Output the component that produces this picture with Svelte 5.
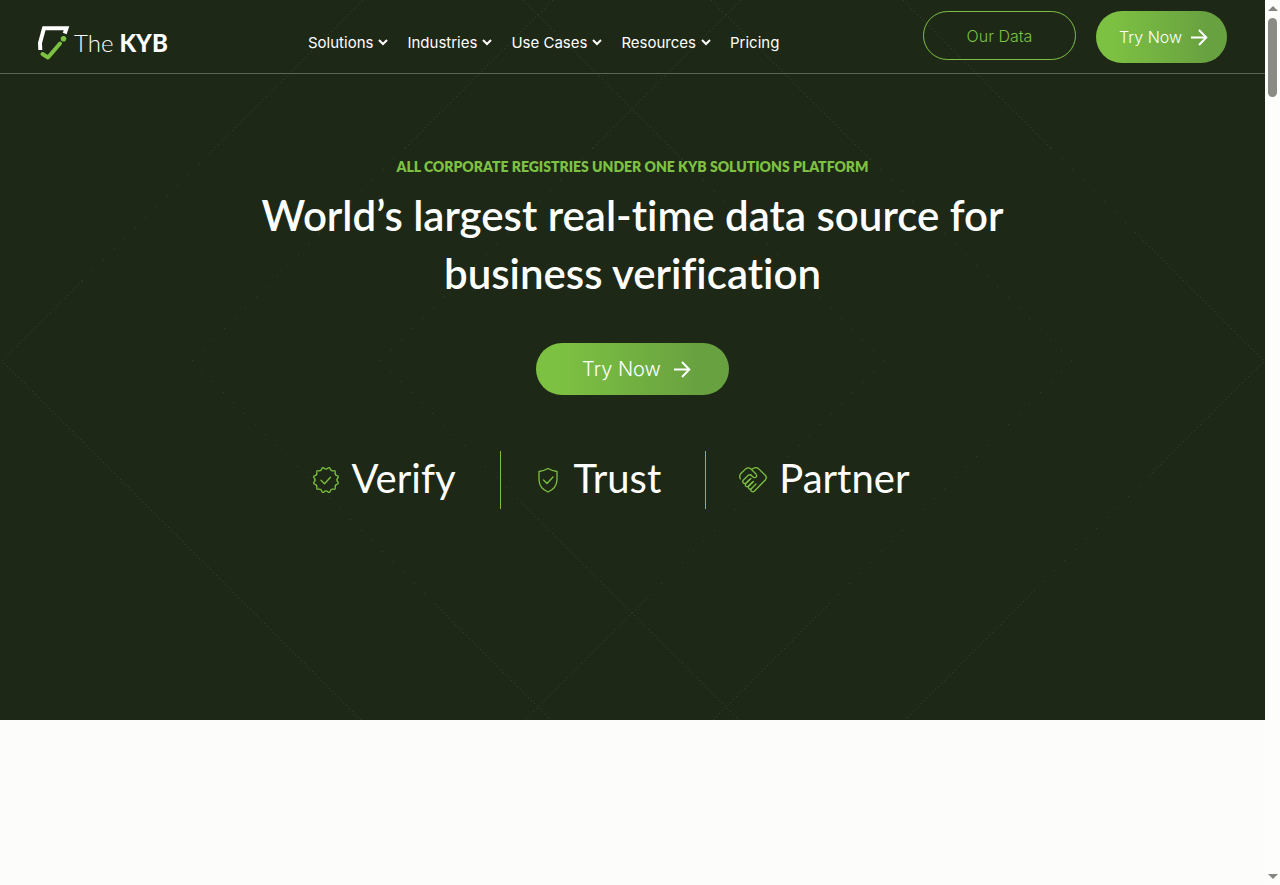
<script>
    const menu = [
        { label: 'Solutions', dropdown: true },
        { label: 'Industries', dropdown: true },
        { label: 'Use Cases', dropdown: true },
        { label: 'Resources', dropdown: true },
        { label: 'Pricing', dropdown: false }
    ];

    const features = [
        { label: 'Verify', icon: 'seal' },
        { label: 'Trust', icon: 'shield' },
        { label: 'Partner', icon: 'hands' }
    ];

    // scalloped outline of the seal icon
    function sealPath(bumps, outer, inner) {
        const points = [];
        for (let i = 0; i < bumps * 2; i++) {
            const angle = (i * Math.PI) / bumps - Math.PI / 2 + Math.PI / bumps;
            const r = i % 2 ? inner : outer;
            points.push([14 + r * Math.cos(angle), 14 + r * Math.sin(angle)]);
        }
        const mid = (a, b) => `${((a[0] + b[0]) / 2).toFixed(2)} ${((a[1] + b[1]) / 2).toFixed(2)}`;
        let d = `M${mid(points[points.length - 1], points[0])}`;
        points.forEach((p, i) => {
            const next = points[(i + 1) % points.length];
            d += `Q${p[0].toFixed(2)} ${p[1].toFixed(2)} ${mid(p, next)}`;
        });
        return d + 'Z';
    }

    const seal = sealPath(12, 13.8, 10);
</script>

{#snippet arrow()}
    <svg class="arrow" viewBox="0 0 18 18" aria-hidden="true">
        <path d="M1 9.500h15M9 2l7.300 7.500L9 17" />
    </svg>
{/snippet}

<div class="screen">
    <div class="page">
        <div class="top">
            <svg class="lines" viewBox="0 0 1265 720" preserveAspectRatio="xMidYMid slice" aria-hidden="true">
                <g class="strong">
                    <path d="M363 0L210 153M82 281L2 361L361 720" />
                    <path d="M903 0L1051 148M1135 232L1264 361L1150 475M1035 590L905 720" />
                    <path d="M553 0L405 148M435 604L551 720M741 0L593 148" />
                    <path d="M523 0L682 159M711 0L870 159M830 603L713 720" />
                    <path d="M521 502L739 720M647 598L525 720" />
                </g>
                <g class="faint">
                    <path d="M210 153L82 281M405 148L192 361L435 604" />
                    <path d="M593 148L380 361L521 502M1051 148L1135 232" />
                    <path d="M682 159L884 361L647 598M870 159L1072 361L830 603M1150 475L1035 590" />
                </g>
            </svg>

            <header>
                <a class="logo" href="/" aria-label="The KYB">
                    <svg viewBox="0 0 32 36" aria-hidden="true">
                        <path class="frame" d="M2.300 25L2 18L6 3.300H28.500L26.700 8.500" />
                        <path class="tick" d="M4.500 29L10 32.500L22 18.500" />
                        <circle cx="25.5" cy="13.8" r="2.8" />
                    </svg>
                    <span class="the">The</span>
                    <span class="kyb">KYB</span>
                </a>
                <nav>
                    {#each menu as item}
                        <a href="/">
                            {item.label}
                            {#if item.dropdown}
                                <svg viewBox="0 0 10 8" aria-hidden="true"><path d="M1 2l4 4 4-4" /></svg>
                            {/if}
                        </a>
                    {/each}
                </nav>
                <div class="actions">
                    <a class="pill outline" href="/">Our Data</a>
                    <a class="pill filled" href="/">Try Now {@render arrow()}</a>
                </div>
            </header>

            <section class="hero">
                <p class="eyebrow">ALL CORPORATE REGISTRIES UNDER ONE KYB SOLUTIONS PLATFORM</p>
                <h1>World’s largest real-time data source for business verification</h1>
                <a class="pill filled large" href="/">Try Now {@render arrow()}</a>

                <ul>
                    {#each features as feature}
                        <li>
                            <svg viewBox="0 0 28 28" aria-hidden="true">
                                {#if feature.icon === 'seal'}
                                    <path d={seal} />
                                    <path d="M9 14.300l3.500 3.500 6-6.500" />
                                {:else if feature.icon === 'shield'}
                                    <path d="M14 2.500Q9.500 5 5 5.500V14Q5.500 22.500 14 26Q22.500 22.500 23 14V5.500Q18.500 5 14 2.500Z" />
                                    <path d="M9.500 14l3.500 3.500 6-6.500" />
                                {:else}
                                    <path d="M1.300 13Q-.3 9.500 2.300 7L7 2.600Q9.500 1 12 3L17 8Q18.500 10.400 16.500 11.400Q15 12 13.500 10.500L11.800 8.800" />
                                    <path d="M12.500 3.500L14.500 2.200Q17 .8 19.500 2.600L26.500 9.500Q28 11.500 26.500 13.700L15.500 25Q14 26.500 12.400 25.200Q11 24 12.500 22.500L17 18" />
                                    <path d="M11.800 8.800L9.500 9L4.200 14.200Q3 16 4.500 17.200Q6 18 7.200 16.900L10.500 13.500" />
                                    <path d="M12 12.500L6.600 17.800Q5.700 19.200 6.900 20.300Q8.200 21.200 9.500 20L13.500 16" />
                                    <path d="M14.500 15.500L9.700 20.300Q8.800 21.800 10 22.800Q11.200 23.800 12.700 22.400" />
                                {/if}
                            </svg>
                            <span>{feature.label}</span>
                        </li>
                    {/each}
                </ul>
            </section>
        </div>
    </div>

    <div class="scrollbar" aria-hidden="true">
        <svg viewBox="0 0 10 5"><path d="M0 5L5 0L10 5Z" /></svg>
        <div class="track"><div class="thumb"></div></div>
        <svg viewBox="0 0 10 5"><path d="M0 0L5 5L10 0Z" /></svg>
    </div>
</div>

<style>
    :global(body) {
        margin: 0;
        background: #fcfcfa;
    }

    .screen {
        display: flex;
        height: 100vh;
        overflow: hidden;
        font-family: Lato, "Noto Sans", sans-serif;
        font-variant-ligatures: none;
        color: #fff;
    }

    .page {
        flex: 1;
        min-width: 0;
    }

    a {
        color: inherit;
        text-decoration: none;
    }

    svg {
        flex: none;
        fill: none;
        stroke: currentColor;
    }

    .top {
        position: relative;
        background: #1e2816;
    }

    .lines {
        position: absolute;
        inset: 0;
        width: 100%;
        height: 100%;
        stroke: #3c4934;
    }

    .strong {
        stroke-dasharray: 1 3;
    }

    .faint {
        stroke-dasharray: 1 14;
    }

    header {
        position: relative;
        display: flex;
        align-items: flex-start;
        height: 73px;
        padding: 0 38px;
        border-bottom: 1px solid #5a6650;
    }

    .logo {
        display: flex;
        align-items: center;
        width: 270px;
        height: 86px;
        font-size: 24px;
        line-height: 32px;
    }

    .logo svg {
        width: 32px;
        height: 36px;
        margin-right: 4px;
    }

    .frame {
        stroke: #fff;
        stroke-width: 4;
    }

    .tick {
        stroke: #7dc142;
        stroke-width: 4;
        stroke-linecap: round;
        stroke-linejoin: round;
    }

    circle {
        fill: #7dc142;
        stroke: none;
    }

    .the {
        font-weight: 300;
        margin-right: 6px;
    }

    .kyb {
        font-weight: 900;
    }

    nav {
        display: flex;
        gap: 19px;
        height: 84px;
        font-family: Inter, sans-serif;
        font-size: 15px;
    }

    nav a {
        display: flex;
        align-items: center;
        gap: 5px;
        white-space: nowrap;
    }

    nav svg {
        width: 10px;
        height: 8px;
        stroke-width: 2;
    }

    .actions {
        display: flex;
        align-items: flex-start;
        gap: 20px;
        margin-left: auto;
        padding-top: 11px;
    }

    .pill {
        box-sizing: border-box;
        display: flex;
        align-items: center;
        justify-content: center;
        border-radius: 26px;
        font-family: Inter, sans-serif;
        font-size: 16px;
        font-weight: 300;
        white-space: nowrap;
    }

    .outline {
        width: 153px;
        height: 49px;
        border: 1px solid #7dc142;
        color: #7dc142;
    }

    .filled {
        gap: 8px;
        width: 131px;
        height: 52px;
        padding-left: 4px;
        background: linear-gradient(90deg, #7dc142 12%, #68a140 85%);
    }

    .arrow {
        width: 18px;
        height: 18px;
        stroke-width: 2;
    }

    .large {
        gap: 12px;
        width: 193px;
        padding-left: 8px;
        font-size: 20px;
    }

    .hero {
        position: relative;
        display: flex;
        flex-direction: column;
        align-items: center;
        padding: 83px 16px 211px;
    }

    .eyebrow {
        margin: 0 0 9px;
        font-size: 14px;
        font-weight: 800;
        line-height: 20px;
        color: #7dc142;
    }

    h1 {
        max-width: 840px;
        margin: 0 0 41px;
        font-size: 42px;
        font-weight: 600;
        line-height: 58px;
        text-align: center;
    }

    ul {
        display: flex;
        margin: 56px 0 0;
        padding: 0;
        list-style: none;
    }

    li {
        display: flex;
        align-items: center;
        gap: 12px;
        padding: 0 44px 0 33px;
        font-size: 40px;
        line-height: 54px;
    }

    li:first-child {
        padding-left: 0;
    }

    li + li {
        border-left: 1px solid #7dc142;
    }

    li span {
        padding-bottom: 4px;
    }

    li svg {
        width: 28px;
        height: 28px;
        color: #7dc142;
        stroke-width: 1.3;
        stroke-linecap: round;
        stroke-linejoin: round;
    }

    .scrollbar {
        box-sizing: border-box;
        display: flex;
        flex-direction: column;
        align-items: center;
        width: 15px;
        padding: 6px 0;
        background: #fdfdfc;
    }

    .scrollbar svg {
        width: 10px;
        height: 5px;
        fill: #85857f;
        stroke: none;
    }

    .track {
        flex: 1;
        padding-top: 7px;
    }

    .thumb {
        width: 9px;
        height: 79px;
        border-radius: 5px;
        background: #8b8b85;
    }
</style>
